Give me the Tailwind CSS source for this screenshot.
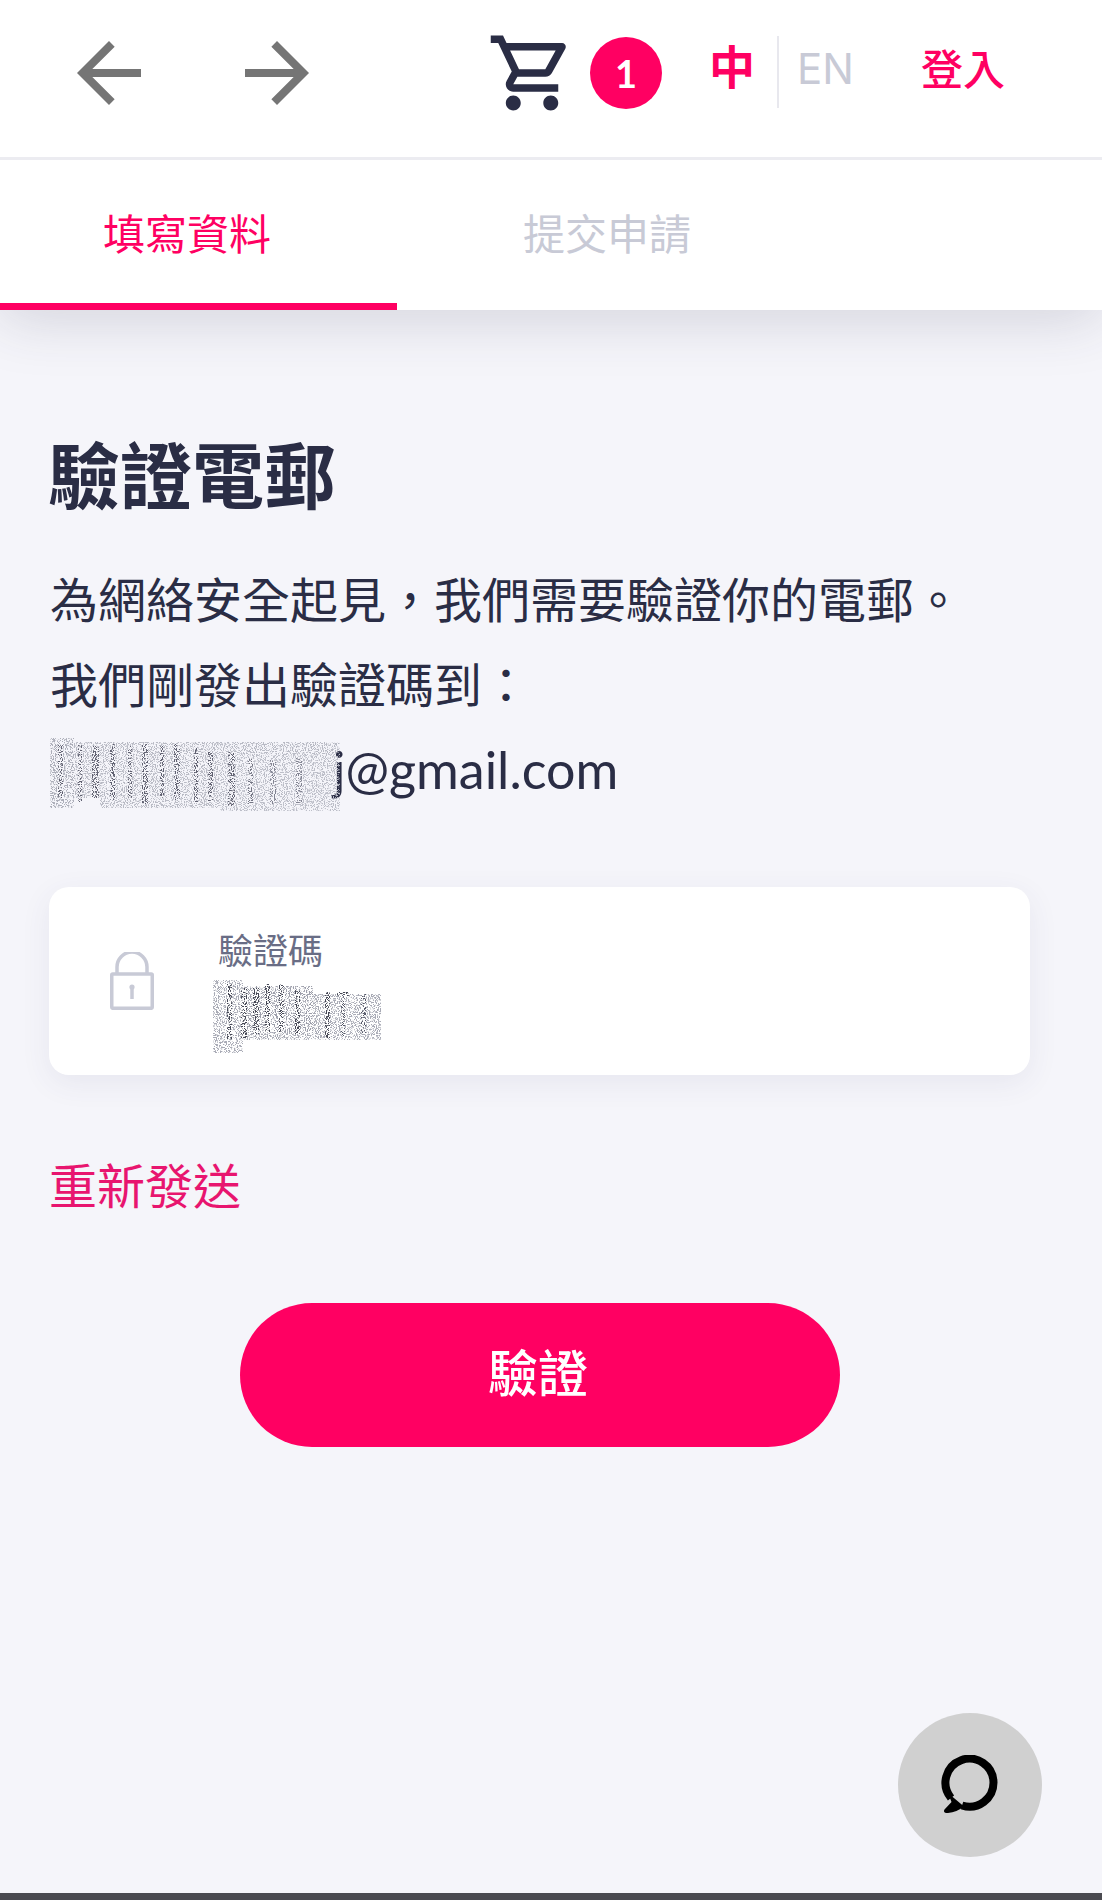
<!DOCTYPE html>
<html lang="zh-Hant">
<head>
<meta charset="utf-8">
<title>驗證電郵</title>
<script src="https://cdn.jsdelivr.net/npm/@tailwindcss/browser@4"></script>
</head>
<body class="m-0">
<svg width="0" height="0" class="absolute">
  <defs>
    <filter id="speckle" x="0" y="0" width="100%" height="100%">
      <feTurbulence type="fractalNoise" baseFrequency="0.9" numOctaves="2" seed="4" result="n"/>
      <feColorMatrix in="n" type="matrix" values="0 0 0 0 0  0 0 0 0 0  0 0 0 0 0  0 0 0 9 -4.4" result="m"/>
      <feComposite in="SourceGraphic" in2="m" operator="in"/>
    </filter>
  </defs>
</svg>
<div class="relative w-[1102px] h-[1900px] overflow-hidden bg-[#f5f5fa] text-[#2a2d45] font-['Lato','Noto_Sans_CJK_TC',sans-serif]">
  <header class="relative z-10 flex items-center h-[160px] bg-white border-b-[3px] border-[#ececf1] pl-[61px]">
    <svg viewBox="0 0 24 24" class="w-[96px] h-[96px] fill-[#757575] -mt-[12px]"><path d="M20 11H7.83l5.59-5.59L12 4l-8 8 8 8 1.41-1.41L7.83 13H20v-2z"/></svg>
    <svg viewBox="0 0 24 24" class="w-[96px] h-[96px] fill-[#757575] ml-[72px] -mt-[12px]"><path d="M12 4l-1.41 1.41L16.17 11H4v2h12.17l-5.58 5.59L12 20l8-8z"/></svg>
    <svg viewBox="0 0 24 24" class="w-[90px] h-[90px] fill-[#2a2d45] ml-[162px] -mt-[12px]"><path d="M15.55 13c.75 0 1.41-.41 1.75-1.03l3.58-6.47c.37-.66-.11-1.48-.87-1.48H5.21l-.94-2H1v2h2l3.6 7.59-1.35 2.44C4.52 15.37 5.48 17 7 17h12v-2H7l1.1-2h7.45zM6.16 6h12.15l-2.76 5H8.53L6.16 6zM7 18c-1.1 0-1.99.9-1.99 2S5.9 22 7 22s2-.9 2-2-.9-2-2-2zm10 0c-1.1 0-1.99.9-1.99 2s.89 2 1.99 2 2-.9 2-2-.9-2-2-2z"/></svg>
    <div class="flex items-center justify-center w-[72px] h-[72px] ml-[13px] -mt-[12px] rounded-full bg-[#ff0062] text-white text-[38px] font-bold leading-none">1</div>
    <span class="ml-[47px] -mt-[24px] text-[46px] leading-none font-bold text-[#ff0062]">中</span>
    <div class="w-[2px] h-[72px] ml-[22px] -mt-[14px] bg-[#e8e8ee]"></div>
    <span class="ml-[18px] -mt-[20px] text-[42px] leading-none text-[#c8cad6] font-['Inter',sans-serif]">EN</span>
    <span class="ml-[67px] -mt-[20px] text-[42px] leading-none font-medium text-[#ff0062]">登入</span>
  </header>

  <nav class="relative flex h-[150px] bg-white shadow-[0_8px_60px_rgba(50,50,80,0.18)]">
    <div class="w-[397px] h-[150px] pl-[103px] pt-[50px] border-b-[7px] border-[#ff0062] text-[42px] leading-[48px] text-[#ff0062]">填寫資料</div>
    <div class="w-[397px] h-[150px] pl-[126px] pt-[50px] text-[42px] leading-[48px] text-[#c8cad6]">提交申請</div>
  </nav>

  <main class="px-[51px]">
    <h1 class="mt-[123px] -ml-[3px] text-[72px] leading-[84px] font-bold">驗證電郵</h1>
    <div class="mt-[40px] -ml-px text-[48px] leading-[85px]">
      <p>為網絡安全起見，我們需要驗證你的電郵。</p>
      <p>我們剛發出驗證碼到：</p>
      <p class="relative pl-[283px] text-[52px]">
        j@gmail.com
        <svg viewBox="0 0 290 73" class="absolute left-0 top-[11px] w-[290px] h-[73px]">
          <g filter="url(#speckle)">
            <rect x="0" y="4" width="290" height="56" fill="#b8bac4"/>
            <rect x="0" y="0" width="24" height="70" fill="#acaeb9"/>
            <rect x="50" y="8" width="180" height="62" fill="#b8bac4"/>
            <rect x="170" y="16" width="120" height="57" fill="#bcbec8"/>
            <rect x="8" y="6" width="5" height="54" fill="#5f6170"/>
            <rect x="28" y="6" width="4" height="58" fill="#5f6170"/>
            <rect x="42" y="8" width="7" height="52" fill="#5f6170"/>
            <rect x="60" y="6" width="5" height="56" fill="#5f6170"/>
            <rect x="78" y="8" width="4" height="52" fill="#5f6170"/>
            <rect x="92" y="6" width="6" height="60" fill="#5f6170"/>
            <rect x="110" y="8" width="4" height="52" fill="#5f6170"/>
            <rect x="124" y="6" width="6" height="56" fill="#5f6170"/>
            <rect x="144" y="10" width="4" height="54" fill="#5f6170"/>
            <rect x="158" y="14" width="5" height="50" fill="#5f6170"/>
            <rect x="178" y="14" width="7" height="54" fill="#5f6170"/>
            <rect x="198" y="20" width="5" height="46" fill="#737583"/>
            <rect x="220" y="22" width="6" height="44" fill="#828492"/>
            <rect x="246" y="20" width="6" height="46" fill="#828492"/>
          </g>
        </svg>
      </p>
    </div>

    <div class="relative flex mt-[75px] w-[981px] h-[188px] -ml-[2px] rounded-[20px] bg-white shadow-[0_8px_30px_rgba(70,70,110,0.08)]">
      <svg viewBox="0 0 44 58" class="w-[44px] h-[58px] mt-[65px] ml-[61px] fill-none stroke-[#c8cad6] stroke-[3.5]">
        <path d="M7 22V15a15 15 0 0 1 30 0v7"/>
        <rect x="1.75" y="22" width="40.5" height="34.3" rx="1"/>
        <circle cx="22" cy="35" r="2.6" class="fill-[#c8cad6] stroke-none"/>
        <path d="M22 36v11"/>
      </svg>
      <div class="ml-[64px] pt-[43px]">
        <div class="text-[35px] leading-[40px] text-[#696d85]">驗證碼</div>
        <svg viewBox="0 0 168 73" class="absolute left-[164px] top-[93px] w-[168px] h-[73px]">
          <g filter="url(#speckle)">
            <rect x="0" y="14" width="168" height="46" fill="#a8aab5"/>
            <rect x="0" y="0" width="30" height="73" fill="#a8aab5"/>
            <rect x="30" y="6" width="70" height="46" fill="#9c9eaa"/>
            <rect x="14" y="4" width="5" height="56" fill="#444755"/>
            <rect x="28" y="8" width="6" height="50" fill="#444755"/>
            <rect x="40" y="8" width="6" height="46" fill="#444755"/>
            <rect x="52" y="4" width="5" height="48" fill="#444755"/>
            <rect x="66" y="4" width="5" height="48" fill="#444755"/>
            <rect x="82" y="10" width="5" height="44" fill="#444755"/>
            <rect x="112" y="12" width="5" height="46" fill="#444755"/>
            <rect x="124" y="12" width="12" height="4" fill="#444755"/>
            <rect x="128" y="14" width="4" height="42" fill="#555868"/>
            <rect x="148" y="14" width="5" height="40" fill="#555868"/>
          </g>
        </svg>
      </div>
    </div>

    <div class="mt-[81px] -ml-[2px] text-[48px] leading-[60px] text-[#e8156f]">重新發送</div>

    <button class="block w-[600px] h-[144px] mt-[87px] ml-[189px] pr-[4px] pb-[4px] rounded-full bg-[#ff0062] text-white text-[50px] font-medium leading-none">驗證</button>
  </main>

  <div class="absolute left-[898px] top-[1713px] flex items-center justify-center w-[144px] h-[144px] rounded-full bg-[#d0d0d0]">
    <svg viewBox="0 0 60 60" class="w-[60px] h-[60px]">
      <path d="M11 43A24 24 0 1 1 22 50.500" class="fill-none stroke-black stroke-[8]"/>
      <path d="M8 38L11.500 47 4.500 54.500C3 57 5 58.500 8 58 14 57 19 55.500 24 51.500Z" class="fill-black"/>
    </svg>
  </div>

  <div class="absolute left-0 bottom-0 w-full h-[7px] bg-[#4a4a50]"></div>
</div>
</body>
</html>
